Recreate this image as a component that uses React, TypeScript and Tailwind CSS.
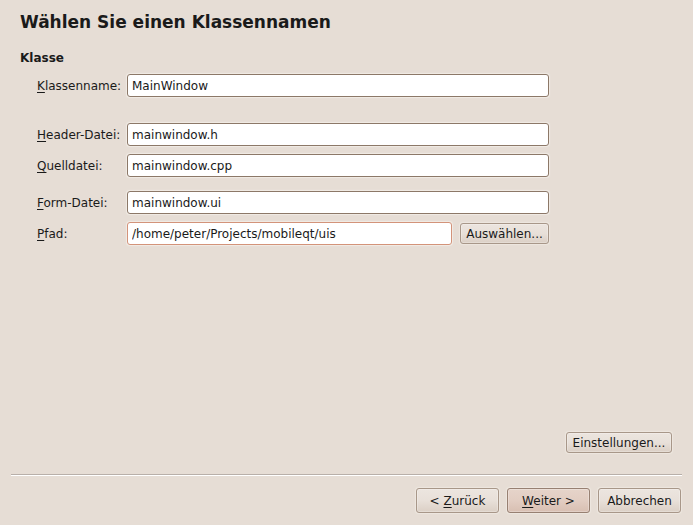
import React from 'react';

const inputBase =
  'h-[23px] min-w-0 flex-1 rounded-[3px] border bg-white px-[4px] text-[12px] leading-4 text-[#1a1a1a] shadow-[0_0_1px_1px_#f1ebe5] outline-none';

const buttonBase =
  'whitespace-nowrap rounded-[3px] border text-[12px] leading-4 text-[#1a1a1a] shadow-[inset_0_0_0_1px_#ffffff40,0_0_1px_1px_#eee7e0]';

const plainButton =
  'border-[#a89789] bg-linear-to-b from-[#ece5df] from-0% via-[#e8e0d9] via-50% to-[#dbcfc5] to-100%';

const defaultButton =
  'border-[#978072] bg-linear-to-b from-[#e6d4ca] from-0% via-[#e2cdc2] via-50% to-[#d8bfb2] to-100%';

function Mnemonic({ children }: { children: string }) {
  return <span className="underline decoration-1 underline-offset-2">{children}</span>;
}

type FieldProps = {
  id: string;
  mnemonic: string;
  rest: string;
  value: string;
  focused?: boolean;
  children?: React.ReactNode;
};

function Field({ id, mnemonic, rest, value, focused, children }: FieldProps) {
  return (
    <div className="flex items-center">
      <label htmlFor={id} className="w-[90px] shrink-0">
        <Mnemonic>{mnemonic}</Mnemonic>
        {rest}
      </label>
      <input
        id={id}
        type="text"
        defaultValue={value}
        className={`${inputBase} ${focused ? 'border-[#d3937a]' : 'border-[#8c7868]'}`}
      />
      {children}
    </div>
  );
}

export default function App() {
  return (
    <main className="flex min-h-screen flex-col bg-[#e6ddd5] px-[11px] pb-3 font-['DejaVu_Sans',sans-serif] text-[12px] leading-4 text-[#1a1a1a]">
      <section className="px-[9px] pt-[11px]">
        <h1 className="text-[17px] leading-[22px] font-bold">Wählen Sie einen Klassennamen</h1>
        <h2 className="mt-[17px] font-bold">Klasse</h2>
        <form className="mt-2 mr-[124px] ml-[17px] flex flex-col gap-2">
          <Field id="class-name" mnemonic="K" rest="lassenname:" value="MainWindow" />
          <div className="mt-[18px] flex flex-col gap-2">
            <Field id="header-file" mnemonic="H" rest="eader-Datei:" value="mainwindow.h" />
            <Field id="source-file" mnemonic="Q" rest="uelldatei:" value="mainwindow.cpp" />
          </div>
          <div className="mt-[6px] flex flex-col gap-2">
            <Field id="form-file" mnemonic="F" rest="orm-Datei:" value="mainwindow.ui" />
            <Field id="path" mnemonic="P" rest="fad:" value="/home/peter/Projects/mobileqt/uis" focused>
              <button type="button" className={`${buttonBase} ${plainButton} ml-2 h-[21px] w-[89px]`}>
                Auswählen...
              </button>
            </Field>
          </div>
        </form>
      </section>
      <div className="mt-auto flex justify-end pr-[10px]">
        <button type="button" className={`${buttonBase} ${plainButton} h-[21px] w-[106px]`}>
          Einstellungen...
        </button>
      </div>
      <hr className="mt-[21px] h-[2px] border-t border-b border-t-[#b8afa9] border-b-white" />
      <footer className="mt-3 flex justify-end gap-2 pr-px">
        <button type="button" className={`${buttonBase} ${plainButton} h-[25px] w-[83px]`}>
          &lt; <Mnemonic>Z</Mnemonic>urück
        </button>
        <button type="submit" className={`${buttonBase} ${defaultButton} h-[25px] w-[83px]`}>
          <Mnemonic>W</Mnemonic>eiter &gt;
        </button>
        <button type="button" className={`${buttonBase} ${plainButton} h-[25px] w-[83px]`}>
          Abbrechen
        </button>
      </footer>
    </main>
  );
}
